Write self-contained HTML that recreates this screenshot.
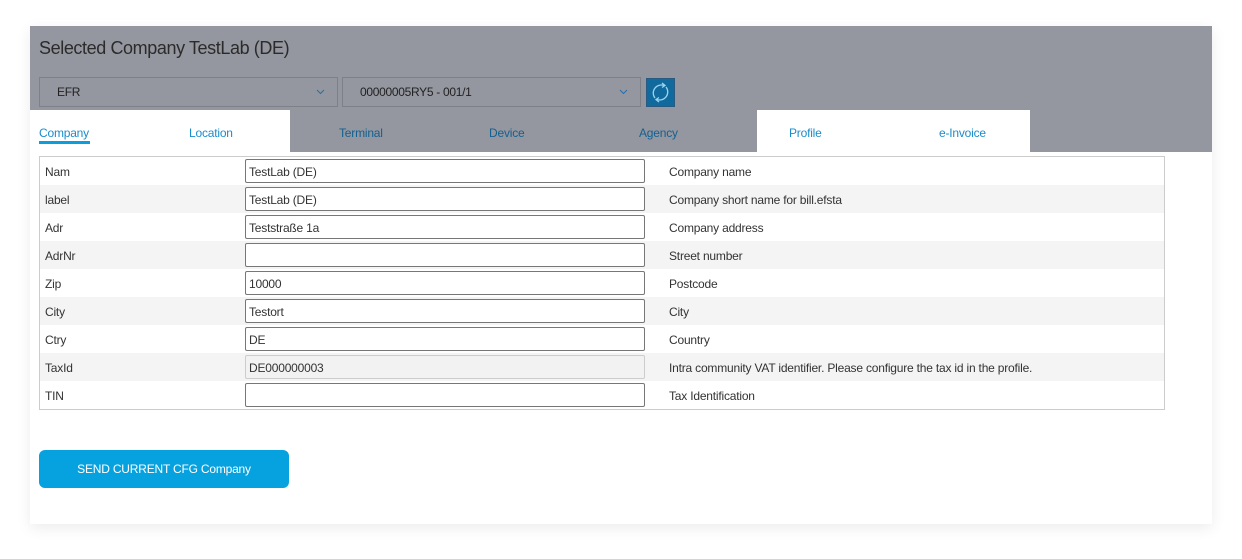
<!DOCTYPE html>
<html><head><meta charset="utf-8"><style>
*{box-sizing:border-box;margin:0;padding:0}
body{width:1242px;height:559px;background:#fff;font-family:"Liberation Sans",sans-serif;font-size:12px;color:#333;position:relative;overflow:hidden}
.card{position:absolute;left:30px;top:26px;width:1182px;height:498px;background:#fff;box-shadow:0 4px 14px rgba(0,0,0,0.08)}
.hdr{position:absolute;left:30px;top:26px;width:1182px;height:126px;background:#9497a0}
.title{position:absolute;left:39px;top:38px;font-size:18px;color:#2b2b2b;letter-spacing:-0.4px}
.sel{position:absolute;top:77px;height:30px;border:1px solid #7e8088;background:#9497a0;color:#222;padding:7px 0 0 17px;letter-spacing:-0.3px}
.sel svg{position:absolute;right:12px;top:11px}
.ref{position:absolute;left:646px;top:78px;width:29px;height:29px;background:#106a9d;border:1px solid #2a5a80}
.tabw{position:absolute;top:110px;height:42px;background:#fff}
.tab{position:absolute;top:126px;font-size:12px;color:#1a8ccc;letter-spacing:-0.2px}
.tab.d{color:#14608f}
.tbl{position:absolute;left:39px;top:156px;width:1126px;height:254px;border:1px solid #ccc}
.row{position:absolute;left:0;width:1124px;height:28px}
.row.g{background:#f4f4f4}
.lab{position:absolute;left:5px;top:8px;letter-spacing:-0.2px}
.inp{position:absolute;left:205px;top:2px;width:400px;height:24px;border:1px solid #777;border-radius:2px;background:#fff;padding:5px 0 0 3px;letter-spacing:-0.2px}
.inp.ro{background:#f2f2f2;border-color:#ccc}
.desc{position:absolute;left:629px;top:8px;letter-spacing:-0.2px}
.btn{position:absolute;left:39px;top:450px;width:250px;height:38px;background:#05a2df;border-radius:6px;color:#fff;text-align:center;line-height:38px;letter-spacing:-0.2px}
</style></head><body>
<div class="card"></div>
<div class="hdr"></div>
<div class="title">Selected Company TestLab (DE)</div>
<div class="sel" style="left:39px;width:299px">EFR<svg width="9" height="6"><path d="M1 1l3.5 3.5L8 1" stroke="#2a6ea8" fill="none"/></svg></div>
<div class="sel" style="left:342px;width:299px">00000005RY5 - 001/1<svg width="9" height="6"><path d="M1 1l3.5 3.5L8 1" stroke="#2a6ea8" fill="none"/></svg></div>
<div class="ref"><svg width="27" height="27" viewBox="0 0 27 27"><path d="M8 19A8 8 0 0 1 17 6.5M19 8A8 8 0 0 1 10 20.5" stroke="#9bd3f0" stroke-width="1.3" fill="none"/><path d="M15 4l3 2.5-3 2M12 18.5l-3 2 3 2.5" stroke="#9bd3f0" stroke-width="1.3" fill="none"/></svg></div>
<div class="tabw" style="left:30px;width:260px"></div>
<div class="tabw" style="left:757px;width:273px"></div>
<div class="tab" style="left:39px">Company</div>
<div style="position:absolute;left:39px;top:141px;width:51px;height:3px;background:#0a9fdc"></div>
<div class="tab" style="left:189px">Location</div>
<div class="tab d" style="left:339px">Terminal</div>
<div class="tab d" style="left:489px">Device</div>
<div class="tab d" style="left:639px">Agency</div>
<div class="tab" style="left:789px">Profile</div>
<div class="tab" style="left:939px">e-Invoice</div>
<div class="tbl">
<div class="row" style="top:0"><span class="lab">Nam</span><div class="inp">TestLab (DE)</div><span class="desc">Company name</span></div>
<div class="row g" style="top:28px"><span class="lab">label</span><div class="inp">TestLab (DE)</div><span class="desc">Company short name for bill.efsta</span></div>
<div class="row" style="top:56px"><span class="lab">Adr</span><div class="inp">Teststraße 1a</div><span class="desc">Company address</span></div>
<div class="row g" style="top:84px"><span class="lab">AdrNr</span><div class="inp"></div><span class="desc">Street number</span></div>
<div class="row" style="top:112px"><span class="lab">Zip</span><div class="inp">10000</div><span class="desc">Postcode</span></div>
<div class="row g" style="top:140px"><span class="lab">City</span><div class="inp">Testort</div><span class="desc">City</span></div>
<div class="row" style="top:168px"><span class="lab">Ctry</span><div class="inp">DE</div><span class="desc">Country</span></div>
<div class="row g" style="top:196px"><span class="lab">TaxId</span><div class="inp ro">DE000000003</div><span class="desc">Intra community VAT identifier. Please configure the tax id in the profile.</span></div>
<div class="row" style="top:224px"><span class="lab">TIN</span><div class="inp"></div><span class="desc">Tax Identification</span></div>
</div>
<div class="btn">SEND CURRENT CFG Company</div>
</body></html>
